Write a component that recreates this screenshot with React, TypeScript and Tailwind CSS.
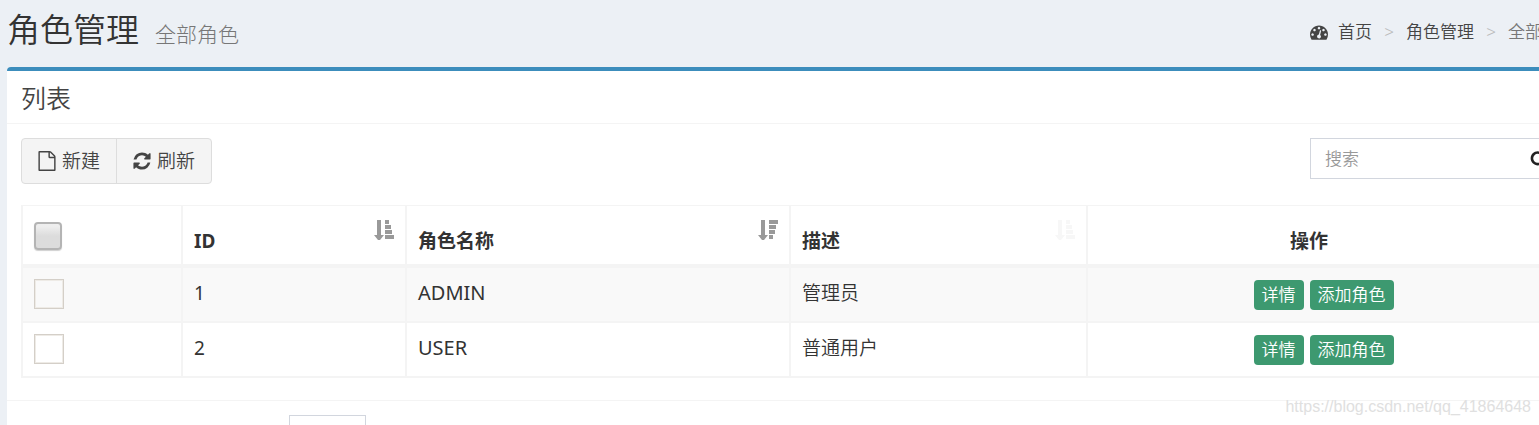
import React from "react";

type IconProps = { path: string; className: string };

function Icon({ path, className }: IconProps) {
  return (
    <svg viewBox="0 0 1792 1792" fill="currentColor" aria-hidden="true" className={className}>
      <path d={path} />
    </svg>
  );
}

const DASHBOARD =
  "M384 1152q0-53-37.5-90.5t-90.5-37.5-90.5 37.5-37.5 90.5 37.5 90.5 90.5 37.5 90.5-37.5 37.5-90.5zm192-448q0-53-37.5-90.5t-90.5-37.5-90.5 37.5-37.5 90.5 37.5 90.5 90.5 37.5 90.5-37.5 37.5-90.5zm428 481l101-382q6-26-7.5-48.5t-38.5-29.5-48 6.5-30 39.5l-101 382q-60 5-107 43.5t-63 98.5q-20 77 20 146t117 89 146-20 89-117q16-60-6-117t-72-91zm660-33q0-53-37.5-90.5t-90.5-37.5-90.5 37.5-37.5 90.5 37.5 90.5 90.5 37.5 90.5-37.5 37.5-90.5zm-640-640q0-53-37.5-90.5t-90.5-37.5-90.5 37.5-37.5 90.5 37.5 90.5 90.5 37.5 90.5-37.5 37.5-90.5zm448 192q0-53-37.5-90.5t-90.5-37.5-90.5 37.5-37.5 90.5 37.5 90.5 90.5 37.5 90.5-37.5 37.5-90.5zm320 448q0 261-141 483-19 29-54 29h-1402q-35 0-54-29-141-221-141-483 0-182 71-348t191-286 286-191 348-71 348 71 286 191 191 286 71 348z";
const REFRESH =
  "M1639 1056q0 5-1 7-64 268-268 434.5t-478 166.5q-146 0-282.5-55t-243.5-157l-129 129q-19 19-45 19t-45-19-19-45v-448q0-26 19-45t45-19h448q26 0 45 19t19 45-19 45l-137 137q71 66 161 102t187 36q134 0 250-65t186-179q11-17 53-117 8-23 30-23h192q13 0 22.5 9.5t9.5 22.5zm25-800v448q0 26-19 45t-45 19h-448q-26 0-45-19t-19-45 19-45l138-138q-148-137-349-137-134 0-250 65t-186 179q-11 17-53 117-8 23-30 23h-199q-13 0-22.5-9.5t-9.5-22.5v-7q65-268 270-434.5t480-166.5q146 0 284 55.5t245 156.5l130-129q19-19 45-19t45 19 19 45z";
const FILE =
  "M1596 380q28 28 48 76t20 88v1152q0 40-28 68t-68 28h-1344q-40 0-68-28t-28-68v-1600q0-40 28-68t68-28h896q40 0 88 20t76 48zm-444-244v376h376q-10-29-22-41l-313-313q-12-12-41-22zm384 1528v-1024h-416q-40 0-68-28t-28-68v-416h-768v1536h1280z";
const SEARCH =
  "M1216 832q0-185-131.5-316.5t-316.5-131.5-316.5 131.5-131.5 316.5 131.5 316.5 316.5 131.5 316.5-131.5 131.5-316.5zm512 832q0 52-38 90t-90 38q-54 0-90-38l-343-342q-179 124-399 124-143 0-273.5-55.5t-225-150-150-225-55.5-273.5 55.5-273.5 150-225 225-150 273.5-55.5 273.5 55.5 225 150 150 225 55.5 273.5q0 220-124 399l343 343q37 37 37 90z";

type Order = "asc" | "desc";

function SortIcon({ order, className }: { order: Order; className: string }) {
  const bars = order === "asc" ? [4, 6, 7, 9] : [9, 7, 6, 4];
  return (
    <svg viewBox="0 0 20 20" fill="currentColor" aria-hidden="true" className={"h-5 w-5 " + className}>
      <path d="M3 0h4v15h3l-4 5h-2L0 15h3z" />
      {bars.map((w, i) => (
        <rect key={i} x="11" y={i * 5} width={w} height="4" />
      ))}
    </svg>
  );
}

const roles = [
  { id: 1, name: "ADMIN", desc: "管理员" },
  { id: 2, name: "USER", desc: "普通用户" },
];

const headings: { label: string; order: Order; tone: string }[] = [
  { label: "ID", order: "asc", tone: "text-[#999999]" },
  { label: "角色名称", order: "desc", tone: "text-[#999999]" },
  { label: "描述", order: "asc", tone: "text-[#f7f7f7]" },
];

const labelButton = "h-[30px] rounded-[4px] bg-[#3d9970] px-2 text-[17px] leading-[30px] text-white";

export default function App() {
  return (
    <div className="relative h-screen overflow-hidden bg-[#ecf0f5] font-['Noto_Sans','Noto_Sans_CJK_SC',sans-serif] text-[19px] font-[350] text-[#333333]">
      <div className="-mr-11 pl-[7px]">
        <header className="flex h-[67px] items-start justify-between">
          <h1 className="flex items-baseline gap-4 pt-[5px] text-[33px] leading-[50px]">
            角色管理
            <small className="text-[21px] font-light text-[#777777]">全部角色</small>
          </h1>
          <nav aria-label="breadcrumb" className="w-[273px] pt-5 text-[17px] leading-6 text-[#444444]">
            <ol className="flex items-center whitespace-nowrap">
              <li>
                <a href="#home" className="flex items-center gap-2.5">
                  <Icon path={DASHBOARD} className="h-[18px] w-[18px]" />
                  首页
                </a>
              </li>
              <li className="w-[34px] text-center text-[#bbbbbb]" aria-hidden="true">&gt;</li>
              <li>
                <a href="#roles">角色管理</a>
              </li>
              <li className="w-[34px] text-center text-[#bbbbbb]" aria-hidden="true">&gt;</li>
              <li className="text-[#777777]">全部角色</li>
            </ol>
          </nav>
        </header>

        <main className="mr-2 rounded-t-[4px] border-t-4 border-[#3c8dbc] bg-white">
          <div className="border-b border-[#f4f4f4] px-3.5 pt-[13px] pb-[11px]">
            <h3 className="text-[25px] leading-7 text-[#444444]">列表</h3>
          </div>

          <div className="px-3.5 pt-3.5 pb-[22px]">
            <div className="flex items-start justify-between pb-[21px]">
              <div className="flex rounded-[4px] border border-[#dddddd] bg-[#f4f4f4] text-[#444444]">
                <button type="button" className="flex h-11 items-center gap-[5px] border-r border-[#dddddd] pr-4 pl-[15px]">
                  <Icon path={FILE} className="h-5 w-5" />
                  新建
                </button>
                <button type="button" className="flex h-11 items-center gap-[5px] pr-4 pl-[15px]">
                  <Icon path={REFRESH} className="h-5 w-5" />
                  刷新
                </button>
              </div>
              <form className="flex h-[41px] w-[251px] items-center border border-[#d2d6de]" onSubmit={(e) => e.preventDefault()}>
                <input
                  type="text"
                  aria-label="搜索"
                  placeholder="搜索"
                  className="h-full min-w-0 flex-1 bg-transparent px-3.5 text-[17px] outline-none placeholder:text-[#999999]"
                />
                <button type="submit" aria-label="提交搜索" className="mr-3 flex items-center text-[#222222]">
                  <Icon path={SEARCH} className="h-[18px] w-[18px]" />
                </button>
              </form>
            </div>

            <table className="w-full table-fixed border-collapse border-2 border-t border-[#f4f4f4] text-left">
              <colgroup>
                <col className="w-[160px]" />
                <col className="w-[224px]" />
                <col className="w-[384px]" />
                <col className="w-[297px]" />
                <col />
              </colgroup>
              <thead>
                <tr className="h-[60px] border-b-4 border-[#f4f4f4] align-top">
                  <th className="border-r-2 border-[#f4f4f4] px-[11px] pt-4">
                    <input
                      type="checkbox"
                      aria-label="全选"
                      className="block h-7 w-7 appearance-none rounded-[4px] border-2 border-[#b4b4b4] bg-linear-to-b from-[#eeeeee] from-10% to-[#dcdcdc] to-50% shadow-[0_1px_1px_#d0d0d0]"
                    />
                  </th>
                  {headings.map((h) => (
                    <th key={h.label} className="border-r-2 border-[#f4f4f4] px-[11px] pt-3.5 font-bold">
                      <div className="flex items-start justify-between">
                        <span className="pt-[7px] leading-7">{h.label}</span>
                        <SortIcon order={h.order} className={h.tone} />
                      </div>
                    </th>
                  ))}
                  <th className="pt-[21px] pr-10 pl-[11px] text-center leading-7 font-bold">操作</th>
                </tr>
              </thead>
              <tbody>
                {roles.map((role) => (
                  <tr key={role.id} className="h-[55px] border-b-2 border-[#f4f4f4] align-top leading-7 first:h-14 odd:bg-[#f9f9f9]">
                    <td className="border-r-2 border-[#f4f4f4] px-[11px] pt-[11px]">
                      <input
                        type="checkbox"
                        aria-label={role.name}
                        className="block h-[30px] w-[30px] appearance-none border border-[#d4cfc8] shadow-[inset_0_0_0_1px_#eeebe6]"
                      />
                    </td>
                    <td className="border-r-2 border-[#f4f4f4] px-[11px] pt-[11px] font-normal">{role.id}</td>
                    <td className="border-r-2 border-[#f4f4f4] px-[11px] pt-[11px] text-[20px] font-normal">{role.name}</td>
                    <td className="border-r-2 border-[#f4f4f4] px-[11px] pt-[11px]">{role.desc}</td>
                    <td className="px-[11px] pt-3">
                      <div className="flex justify-center gap-1.5">
                        <button type="button" className={labelButton}>详情</button>
                        <button type="button" className={labelButton}>添加角色</button>
                      </div>
                    </td>
                  </tr>
                ))}
              </tbody>
            </table>
          </div>

          <footer className="border-t border-[#f4f4f4] pt-3.5 pl-[282px]">
            <select aria-label="每页条数" className="block h-10 w-[77px] appearance-none border border-[#d2d6de] bg-white" />
          </footer>
        </main>
      </div>
      <p className="absolute right-2 bottom-2 font-['Liberation_Sans',sans-serif] text-[16px] leading-5 font-normal text-[#e0e0e0]">
        https://blog.csdn.net/qq_41864648
      </p>
    </div>
  );
}
